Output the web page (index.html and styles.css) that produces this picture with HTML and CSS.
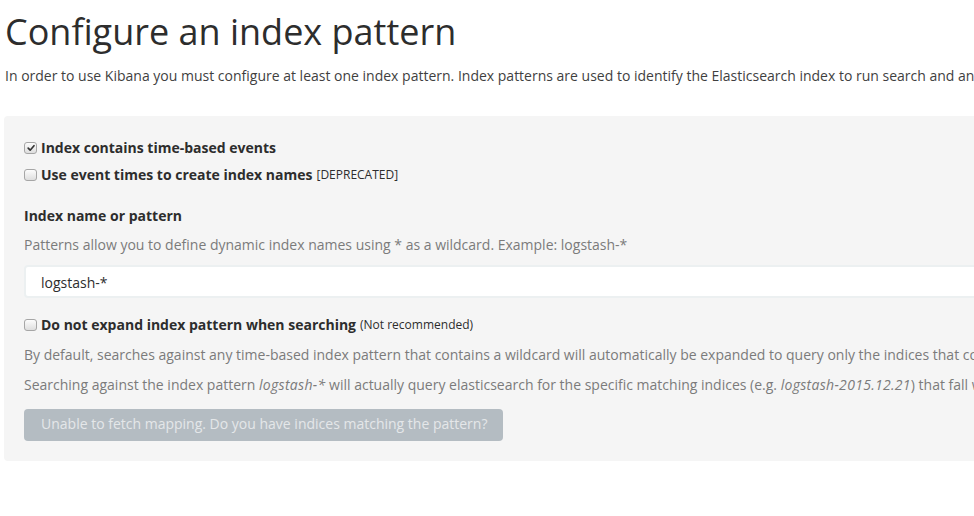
FILE: index.html
```html
<!DOCTYPE html>
<html>
<head>
<meta charset="utf-8">
<link rel="stylesheet" href="styles.css">
</head>
<body>
<div class="page">
  <h1 class="title">Configure an index pattern</h1>
  <p class="intro">In order to use Kibana you must configure at least one index pattern. Index patterns are used to identify the Elasticsearch index to run search and analytics against. They are also used to configure fields.</p>

  <form class="panel">
    <label class="check row-1">
      <span class="box checked"><svg viewBox="0 0 12 12" width="12" height="12"><path d="M2.6 6.2 L5 8.6 L9.6 3.2" fill="none" stroke="#333" stroke-width="2" stroke-linecap="round" stroke-linejoin="round"/></svg></span>
      <span class="check-text">Index contains time-based events</span>
    </label>
    <label class="check row-2">
      <span class="box"></span>
      <span class="check-text">Use event times to create index names</span>
      <small class="note">[DEPRECATED]</small>
    </label>

    <div class="field-label">Index name or pattern</div>
    <div class="help">Patterns allow you to define dynamic index names using * as a wildcard. Example: logstash-*</div>
    <div class="input">logstash-*</div>

    <label class="check row-3">
      <span class="box"></span>
      <span class="check-text">Do not expand index pattern when searching</span>
      <small class="note">(Not recommended)</small>
    </label>
    <p class="help para-1">By default, searches against any time-based index pattern that contains a wildcard will automatically be expanded to query only the indices that contain data within the currently selected time range.</p>
    <p class="help para-2">Searching against the index pattern <em>logstash-*</em> will actually query elasticsearch for the specific matching indices (e.g. <em>logstash-2015.12.21</em>) that fall within the current time range.</p>

    <div class="actions">
      <button type="button" class="btn-disabled">Unable to fetch mapping. Do you have indices matching the pattern?</button>
    </div>
  </form>
</div>
</body>
</html>
```

FILE: styles.css
```css
html, body {
  margin: 0;
  padding: 0;
  background: #ffffff;
  overflow: hidden;
}

body {
  font-family: "Open Sans", "Liberation Sans", sans-serif;
  font-size: 14px;
  line-height: 20px;
  color: #444444;
}

.page {
  width: 1600px;
  padding: 0 0 0 4px;
}

.title {
  margin: 12px 0 0 1px;
  font-size: 36px;
  line-height: 40px;
  font-weight: 400;
  color: #2d2d2d;
  white-space: nowrap;
}

.intro {
  margin: 14px 0 0 1px;
  white-space: nowrap;
  color: #3f3f3f;
}

.panel {
  display: flex;
  flex-direction: column;
  align-items: flex-start;
  margin-top: 30px;
  padding: 22px 20px 20px 20px;
  background: #f5f5f5;
  border-radius: 4px;
  width: 1400px;
}

.check {
  display: flex;
  align-items: center;
  height: 20px;
  white-space: nowrap;
  color: #2d2d2d;
}

.row-2 { margin-top: 7px; }
.row-3 { margin-top: 17px; }

.box {
  box-sizing: border-box;
  width: 13px;
  height: 12px;
  margin-right: 4px;
  margin-top: -1px;
  border: 1px solid #a6a6a6;
  border-radius: 3px;
  background: linear-gradient(#fcfcfc, #dedede);
  display: flex;
  align-items: center;
  justify-content: center;
}

.box svg {
  display: block;
  width: 10px;
  height: 10px;
}

.check-text {
  font-weight: 700;
}

.note {
  font-size: 12px;
  margin-left: 4px;
  color: #2d2d2d;
}

.field-label {
  margin-top: 21px;
  font-weight: 700;
  color: #2d2d2d;
}

.help {
  margin: 9px 0 0 0;
  color: #7b7b7b;
  white-space: nowrap;
}

.help em {
  letter-spacing: 0.3px;
}

.input {
  box-sizing: border-box;
  margin-top: 10px;
  width: 1360px;
  height: 33px;
  padding: 4px 15px;
  line-height: 23px;
  background: #ffffff;
  border: 2px solid #ecf0f1;
  border-radius: 4px;
  color: #2d2d2d;
}

.para-1 { margin-top: 10px; }
.para-2 { margin-top: 10px; }

.actions {
  margin-top: 14px;
}

.btn-disabled {
  font-family: "Open Sans", "Liberation Sans", sans-serif;
  font-size: 14px;
  line-height: 20px;
  height: 32px;
  padding: 5px 16px 7px 17px;
  border: none;
  border-radius: 4px;
  background: #b4bcc2;
  color: #e4e7e9;
  white-space: nowrap;
}
```
